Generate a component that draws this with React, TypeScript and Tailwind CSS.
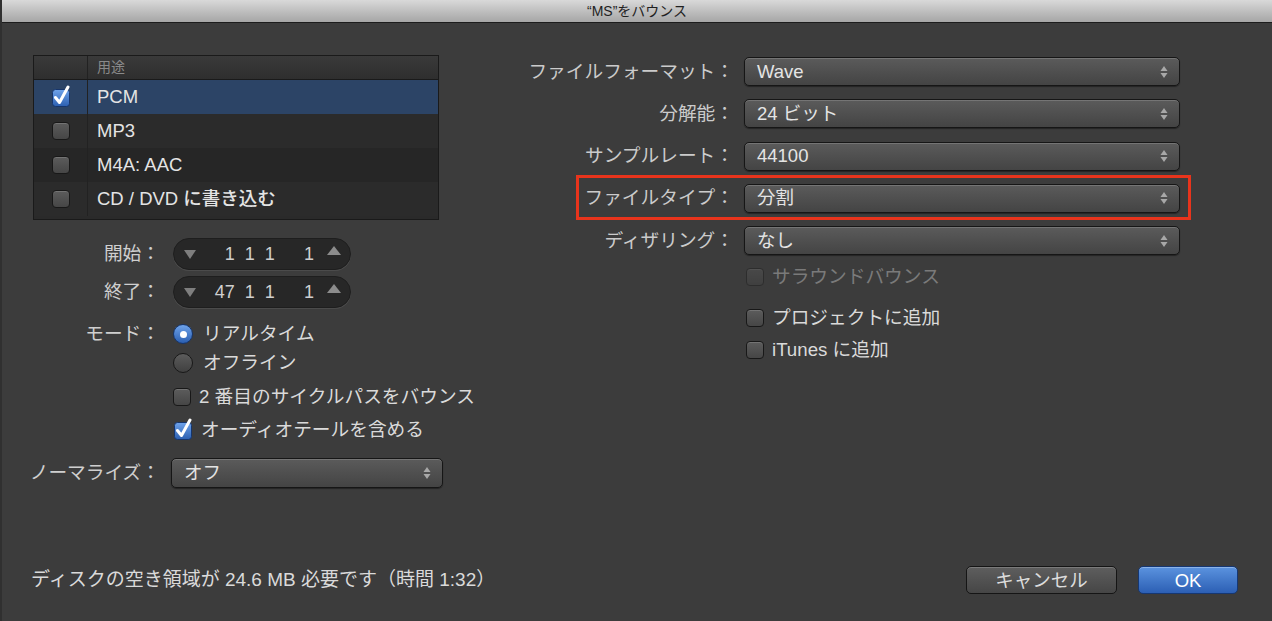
import type { ReactNode } from 'react';

const FONT = "font-['Liberation_Sans','Noto_Sans_CJK_JP',sans-serif]";

const FORMATS = [
  { name: 'PCM', checked: true, rowClass: 'bg-[#2c4466]' },
  { name: 'MP3', checked: false, rowClass: 'bg-[#2b2b2b]' },
  { name: 'M4A: AAC', checked: false, rowClass: 'bg-[#262626]' },
  { name: 'CD / DVD に書き込む', checked: false, rowClass: 'bg-[#2b2b2b]' },
];

const RIGHT_SELECTS = [
  { label: 'ファイルフォーマット：', value: 'Wave' },
  { label: '分解能：', value: '24 ビット' },
  { label: 'サンプルレート：', value: '44100' },
  { label: 'ファイルタイプ：', value: '分割', highlight: true },
  { label: 'ディザリング：', value: 'なし' },
];

export default function App() {
  return (
    <div className={`flex h-[621px] w-[1272px] flex-col overflow-hidden border-l-2 border-[#303030] bg-[#3c3c3c] ${FONT}`}>
      <TitleBar />

      <div className="flex flex-1">
        <LeftColumn />
        <RightColumn />
      </div>

      <div className="mb-[27px] flex h-[28px] items-center justify-between pl-[29px] pr-[34px]">
        <p className="text-[19px] leading-[28px] text-[#dadada]">ディスクの空き領域が 24.6 MB 必要です（時間 1:32）</p>
        <div className="flex items-center gap-[21px]">
          <button
            type="button"
            className="h-[28px] w-[151px] rounded-[5px] border border-[#151515] bg-linear-to-b from-[#5e5e5e] to-[#464646] text-[18.5px] text-[#dcdcdc] shadow-[inset_0_1px_0_rgba(255,255,255,0.18)]"
          >
            キャンセル
          </button>
          <button
            type="button"
            className="h-[28px] w-[100px] rounded-[5px] border border-[#163772] bg-linear-to-b from-[#5b93df] to-[#2c5fb4] text-[18.5px] text-white shadow-[inset_0_1px_0_rgba(255,255,255,0.3)]"
          >
            OK
          </button>
        </div>
      </div>
    </div>
  );
}

function TitleBar() {
  return (
    <div className="flex h-[23px] shrink-0 items-center justify-center border-b border-[#1c1c1c] bg-linear-to-b from-[#d9d9d9] to-[#a6a6a6]">
      <span className="text-[14px] text-[#1f1f1f]">“MS”をバウンス</span>
    </div>
  );
}

function LeftColumn() {
  return (
    <div className="flex w-[498px] shrink-0 flex-col pt-[32px]">
      <div className="ml-[31px] w-[406px] overflow-hidden border border-[#1a1a1a] bg-[#2a2a2a] pb-[3px]">
        <div className="flex h-[24px] items-center border-b border-[#1a1a1a] bg-linear-to-b from-[#3a3a3a] to-[#2e2e2e]">
          <div className="h-full w-[54px] border-r border-[#222]" />
          <span className="pl-[9px] text-[14px] text-[#8a8a8a]">用途</span>
        </div>
        {FORMATS.map((format) => (
          <div key={format.name} className={`flex h-[34px] items-center ${format.rowClass}`}>
            <div className="flex h-full w-[54px] items-center justify-center border-r border-[#222]">
              <Checkbox checked={format.checked} />
            </div>
            <span className="pl-[9px] text-[18.5px] font-medium text-[#e4e4e4]">{format.name}</span>
          </div>
        ))}
      </div>

      <div className="mt-[18px] flex flex-col">
        <FormRow label="開始：">
          <Stepper left="1 1 1" />
        </FormRow>
        <FormRow label="終了：" className="mt-[6px]">
          <Stepper left="47 1 1" />
        </FormRow>
        <FormRow label="モード：" className="mt-[15px]">
          <Radio selected label="リアルタイム" />
        </FormRow>
        <FormRow label="" className="mt-[7px]">
          <Radio label="オフライン" />
        </FormRow>
        <FormRow label="" className="mt-[12px]">
          <CheckRow label="2 番目のサイクルパスをバウンス" />
        </FormRow>
        <FormRow label="" className="mt-[11px]">
          <CheckRow checked label="オーディオテールを含める" />
        </FormRow>
        <FormRow label="ノーマライズ：" className="mt-[17px]">
          <Select value="オフ" className="-ml-[2px] h-[30px] w-[272px]" />
        </FormRow>
      </div>
    </div>
  );
}

function FormRow({ label, children, className = '' }: { label: string; children: ReactNode; className?: string }) {
  return (
    <div className={`flex items-center ${className}`}>
      <span className="w-[158px] shrink-0 text-right text-[18.7px] leading-[22px] text-[#cfcfcf]">{label}</span>
      <div className="ml-[13px]">{children}</div>
    </div>
  );
}

function RightColumn() {
  return (
    <div className="flex w-[682px] shrink-0 flex-col pt-[34px]">
      <div className="flex flex-col gap-[13.3px]">
        {RIGHT_SELECTS.map((row) => (
          <div key={row.label} className="relative flex items-center">
            <span className="w-[234px] shrink-0 text-right text-[18.7px] leading-[22px] text-[#cbcbcb]">{row.label}</span>
            <Select value={row.value} className="ml-[10px] h-[29px] w-[436px]" />
            {row.highlight ? (
              <div className="pointer-events-none absolute -top-[9px] -bottom-[7px] left-[76px] -right-[9px] border-[3px] border-[#e8341c]" />
            ) : null}
          </div>
        ))}
      </div>

      <div className="ml-[246px] mt-[11px] flex flex-col">
        <CheckRow disabled label="サラウンドバウンス" />
        <div className="mt-[19px]">
          <CheckRow label="プロジェクトに追加" />
        </div>
        <div className="mt-[10px]">
          <CheckRow label="iTunes に追加" />
        </div>
      </div>
    </div>
  );
}

function Select({ value, className = '' }: { value: string; className?: string }) {
  return (
    <div
      className={`flex items-center justify-between rounded-[5px] border border-[#161616] bg-linear-to-b from-[#5b5b5b] to-[#444444] pl-[12px] pr-[11px] shadow-[inset_0_1px_0_rgba(255,255,255,0.16),0_1px_1px_rgba(0,0,0,0.4)] ${className}`}
    >
      <span className="text-[18.5px] leading-[22px] text-[#e4e4e4]">{value}</span>
      <svg width="8" height="14" viewBox="0 0 8 14" className="shrink-0">
        <path d="M4 1 L7.5 6 L0.5 6 Z" fill="#a8a8a8" />
        <path d="M4 13 L7.5 8 L0.5 8 Z" fill="#a8a8a8" />
      </svg>
    </div>
  );
}

function Stepper({ left }: { left: string }) {
  return (
    <div className="flex h-[32px] w-[178px] items-center rounded-full border border-[#1e1e1e] bg-[#272727] pl-[10px] pr-[9px] shadow-[0_1px_0_rgba(255,255,255,0.08)]">
      <svg width="12" height="10" viewBox="0 0 12 10" className="shrink-0">
        <path d="M0 1 L12 1 L6 10 Z" fill="#7e7e7e" />
      </svg>
      <span className="w-[80px] whitespace-nowrap text-right text-[18px] leading-[22px] text-[#cfcfcf] [word-spacing:5px]">{left}</span>
      <span className="w-[40px] text-right text-[18px] leading-[22px] text-[#cfcfcf]">1</span>
      <svg width="14" height="10" viewBox="0 0 14 10" className="ml-[13px] shrink-0 -translate-y-[3px]">
        <path d="M7 0 L14 9 L0 9 Z" fill="#8c8c8c" />
      </svg>
    </div>
  );
}

function Checkbox({ checked = false, disabled = false }: { checked?: boolean; disabled?: boolean }) {
  if (checked) {
    return (
      <svg width="20" height="22" viewBox="0 0 20 22" className="-mt-[3px] shrink-0">
        <defs>
          <linearGradient id="cbBlue" x1="0" y1="0" x2="0" y2="1">
            <stop offset="0" stopColor="#6fa3ea" />
            <stop offset="1" stopColor="#2b5fb1" />
          </linearGradient>
        </defs>
        <rect x="1.5" y="4.5" width="17" height="17" rx="3" fill="url(#cbBlue)" stroke="#16356b" />
        <path d="M4.5 12.5 L8.5 17.5 L17 2" fill="none" stroke="#ffffff" strokeWidth="3" strokeLinecap="round" strokeLinejoin="round" />
      </svg>
    );
  }

  return (
    <div
      className={`h-[18px] w-[18px] shrink-0 rounded-[4px] border border-[#181818] bg-linear-to-b from-[#5c5c5c] to-[#464646] shadow-[inset_0_1px_0_rgba(255,255,255,0.15)] ${disabled ? 'opacity-40' : ''}`}
    />
  );
}

function CheckRow({ label, checked = false, disabled = false }: { label: string; checked?: boolean; disabled?: boolean }) {
  return (
    <div className="flex h-[22px] items-center">
      <Checkbox checked={checked} disabled={disabled} />
      <span className={`ml-[8px] text-[18.7px] leading-[22px] ${disabled ? 'text-[#7a7a7a]' : 'text-[#dadada]'}`}>{label}</span>
    </div>
  );
}

function Radio({ label, selected = false }: { label: string; selected?: boolean }) {
  return (
    <div className="flex h-[22px] items-center">
      {selected ? (
        <div className="flex h-[20px] w-[20px] shrink-0 items-center justify-center rounded-full border border-[#16356b] bg-linear-to-b from-[#6fa3ea] to-[#2b5fb1]">
          <div className="h-[7px] w-[7px] rounded-full bg-white" />
        </div>
      ) : (
        <div className="h-[20px] w-[20px] shrink-0 rounded-full border border-[#181818] bg-linear-to-b from-[#5c5c5c] to-[#404040]" />
      )}
      <span className="ml-[10px] text-[18.7px] leading-[22px] text-[#dadada]">{label}</span>
    </div>
  );
}
